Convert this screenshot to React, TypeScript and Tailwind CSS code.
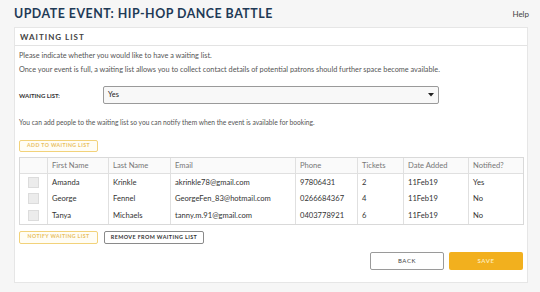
import React from 'react'

const rows = [
  { first: 'Amanda', last: 'Krinkle', email: 'akrinkle78@gmail.com', phone: '97806431', tickets: '2', date: '11Feb19', notified: 'Yes' },
  { first: 'George', last: 'Fennel', email: 'GeorgeFen_83@hotmail.com', phone: '0266684367', tickets: '4', date: '11Feb19', notified: 'No' },
  { first: 'Tanya', last: 'Michaels', email: 'tanny.m.91@gmail.com', phone: '0403778921', tickets: '6', date: '11Feb19', notified: 'No' },
]

const cols = [
  { label: 'First Name', w: 'w-[61px]' },
  { label: 'Last Name', w: 'w-[62px]' },
  { label: 'Email', w: 'w-[125px]' },
  { label: 'Phone', w: 'w-[62px]' },
  { label: 'Tickets', w: 'w-[46px]' },
  { label: 'Date Added', w: 'w-[65px]' },
  { label: 'Notified?', w: '' },
]

function Checkbox() {
  return <div className="w-[11px] h-[11px] bg-[#ececec] border border-[#dcdcdc]" />
}

export default function App() {
  return (
    <div className="w-[540px] h-[292px] bg-[#f6f6f6] font-['Lato',sans-serif] text-[#333] overflow-hidden">
      {/* header */}
      <div className="flex items-center justify-between pl-[14px] pr-[11px] h-[27px]">
        <h1 className="text-[12.4px] font-bold tracking-[0.5px] text-[#1e3a56] leading-none pt-[1px]">
          UPDATE EVENT: HIP-HOP DANCE BATTLE
        </h1>
        <span className="text-[8px] text-[#444]">Help</span>
      </div>

      {/* panel */}
      <div className="ml-[14px] w-[514px] h-[256px] bg-white border border-[#e6e6e6]">
        <div className="h-[18px] flex items-center px-[5px] border-b border-[#e3e3e3]">
          <span className="text-[8px] font-bold tracking-[1px] text-[#444]">WAITING LIST</span>
        </div>

        <div className="px-[4px] text-[7px] text-[#555]">
          <p className="mt-[5px] leading-[10px] text-[7.3px]">Please indicate whether you would like to have a waiting list.</p>
          <p className="mt-[4px] leading-[10px] text-[7.3px]">Once your event is full, a waiting list allows you to collect contact details of potential patrons should further space become available.</p>

          <div className="flex items-center mt-[11px]">
            <span className="w-[84px] text-[6px] font-bold text-[#333]">WAITING LIST:</span>
            <div className="w-[336px] h-[18px] rounded-[2px] border border-[#9a9a9a] bg-[#f8f8f8] flex items-center justify-between px-[4px]">
              <span className="text-[7.4px] text-[#222]">Yes</span>
              <svg width="6" height="4" viewBox="0 0 6 4"><path d="M0 0h6L3 3.5z" fill="#222" /></svg>
            </div>
          </div>

          <p className="mt-[13px] leading-[10px] text-[6.7px]">You can add people to the waiting list so you can notify them when the event is available for booking.</p>

          <button className="mt-[13px] h-[12px] w-[79px] border border-[#f2d27a] rounded-[2px] text-[5.2px] font-bold tracking-[0.4px] text-[#e8c060] bg-[#fffdf5]">
            ADD TO WAITING LIST
          </button>

          {/* table */}
          <div className="mt-[5px] w-[505px] border border-[#d9d9d9] text-[7.6px] text-[#333]">
            <div className="flex h-[16px] items-stretch border-b border-[#e0e0e0] bg-[#fafafa]">
              <div className="w-[28px] border-r border-[#e0e0e0]" />
              {cols.map((c, i) => (
                <div key={c.label} className={`${c.w} ${i === cols.length - 1 ? 'flex-1' : 'border-r border-[#e0e0e0]'} flex items-center px-[4px] text-[#777]`}>
                  {c.label}
                </div>
              ))}
            </div>
            {rows.map((r) => (
              <div key={r.first} className="flex h-[16.5px] items-stretch">
                <div className="w-[28px] border-r border-[#e0e0e0] flex items-center justify-center">
                  <Checkbox />
                </div>
                {[r.first, r.last, r.email, r.phone, r.tickets, r.date, r.notified].map((v, i) => (
                  <div key={i} className={`${cols[i].w} ${i === cols.length - 1 ? 'flex-1' : 'border-r border-[#e0e0e0]'} flex items-center px-[4px]`}>
                    {v}
                  </div>
                ))}
              </div>
            ))}
          </div>

          <div className="flex gap-[6px] mt-[6px]">
            <button className="h-[13px] w-[79px] border border-[#f2d27a] rounded-[2px] text-[5.2px] font-bold tracking-[0.4px] text-[#e8c060] bg-[#fffdf5]">
              NOTIFY WAITING LIST
            </button>
            <button className="h-[13px] w-[100px] border border-[#8a8a8a] rounded-[2px] text-[5.4px] font-bold tracking-[0.4px] text-[#333] bg-white">
              REMOVE FROM WAITING LIST
            </button>
          </div>

          <div className="flex justify-end gap-[5px] mt-[8px]">
            <button className="h-[18px] w-[74px] border border-[#9a9a9a] rounded-[2px] text-[6px] tracking-[0.6px] text-[#444] bg-white">
              BACK
            </button>
            <button className="h-[18px] w-[74px] rounded-[2px] text-[6px] font-bold tracking-[0.6px] text-[#fce9b5] bg-[#f2b01e]">
              SAVE
            </button>
          </div>
        </div>
      </div>
    </div>
  )
}
